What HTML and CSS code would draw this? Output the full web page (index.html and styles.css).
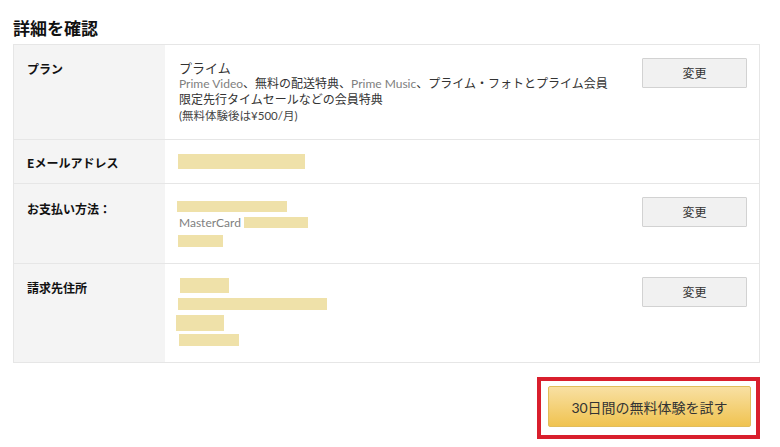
FILE: index.html
```html
<!DOCTYPE html>
<html lang="ja">
<head>
<meta charset="utf-8">
<link rel="stylesheet" href="styles.css">
</head>
<body>
<div class="page">
  <h1 class="title">詳細を確認</h1>
  <div class="table">
    <div class="row row-plan">
      <div class="label">プラン</div>
      <div class="content">
        <div class="plan-name">プライム</div>
        <div class="plan-desc"><span class="latin">Prime Video</span>、無料の配送特典、<span class="latin">Prime Music</span>、プライム・フォトとプライム会員</div>
        <div class="plan-desc">限定先行タイムセールなどの会員特典</div>
        <div class="plan-note">(無料体験後は¥500/月)</div>
      </div>
      <div class="action"><button class="btn-change">変更</button></div>
    </div>
    <div class="row row-email">
      <div class="label">Eメールアドレス</div>
      <div class="content">
        <div class="mask mask-email"></div>
      </div>
      <div class="action"></div>
    </div>
    <div class="row row-pay">
      <div class="label">お支払い方法：</div>
      <div class="content">
        <div class="mask mask-pay1"></div>
        <div class="pay-line"><span class="latin">MasterCard</span><span class="mask mask-pay2"></span></div>
        <div class="mask mask-pay3"></div>
      </div>
      <div class="action"><button class="btn-change">変更</button></div>
    </div>
    <div class="row row-addr">
      <div class="label">請求先住所</div>
      <div class="content">
        <div class="mask mask-a1"></div>
        <div class="mask mask-a2"></div>
        <div class="mask mask-a3"></div>
        <div class="mask mask-a4"></div>
      </div>
      <div class="action"><button class="btn-change">変更</button></div>
    </div>
  </div>
  <div class="cta-wrap">
    <div class="cta-frame">
      <button class="btn-trial">30日間の無料体験を試す</button>
    </div>
  </div>
</div>
</body>
</html>
```

FILE: styles.css
```css
* { box-sizing: border-box; }
html, body {
  margin: 0;
  padding: 0;
  background: #fff;
}
body {
  font-family: "Lato", "Noto Sans CJK JP", sans-serif;
  color: #333;
}
.page {
  width: 747px;
  margin-left: 13px;
  padding-top: 16px;
}
.title {
  margin: 0 0 4px 0;
  font-size: 17px;
  line-height: 24px;
  font-weight: 700;
  color: #111;
  font-family: "Noto Sans CJK JP", sans-serif;
}
.table {
  border: 1px solid #e6e6e6;
}
.row {
  display: grid;
  grid-template-columns: 151px 1fr 117px;
  border-top: 1px solid #e6e6e6;
}
.row:first-child { border-top: 0; }
.label {
  background: #f4f4f4;
  padding: 15px 0 0 13px;
  font-size: 12px;
  line-height: 16px;
  font-weight: 700;
  color: #111;
  font-family: "Noto Sans CJK JP", sans-serif;
}
.content {
  padding: 0 0 0 14px;
  display: flex;
  flex-direction: column;
  align-items: flex-start;
}
.action {
  padding: 13px 12px 0 0;
  display: flex;
  justify-content: flex-end;
  align-items: flex-start;
}
.btn-change {
  width: 105px;
  height: 30px;
  background: #f1f1f1;
  border: 1px solid #d2d2d2;
  border-radius: 1px;
  font-family: "Noto Sans CJK JP", sans-serif;
  font-size: 12px;
  color: #333;
  padding: 0;
  line-height: 28px;
}
.latin {
  font-family: "Lato", sans-serif;
  color: #808080;
}
/* plan row */
.row-plan .content { padding-top: 15px; padding-bottom: 15px; }
.plan-name { font-size: 13px; line-height: 16px; }
.plan-desc { font-size: 12px; line-height: 16px; white-space: nowrap; }
.plan-note { font-size: 11.5px; line-height: 16px; color: #444; }
.row-plan .label { padding-top: 16px; }
/* masks */
.mask { background: #efe1a9; display: block; }
.row-email .content { padding-top: 14px; padding-bottom: 14px; }
.mask-email { width: 127px; height: 15px; margin-left: -1px; }
.row-pay .content { padding-top: 17px; padding-bottom: 16px; }
.row-pay .label { padding-top: 17px; }
.mask-pay1 { width: 110px; height: 11px; margin-left: -2px; }
.pay-line {
  margin-top: 5px;
  height: 11px;
  display: flex;
  align-items: center;
  font-size: 12px;
  line-height: 11px;
}
.mask-pay2 { display: inline-block; width: 64px; height: 11px; margin-left: 3px; }
.mask-pay3 { width: 45px; height: 12px; margin-top: 7px; margin-left: -1px; }
.row-addr .content { padding-top: 14px; padding-bottom: 16px; }
.row-addr .label { padding-top: 16px; }
.mask-a1 { width: 49px; height: 15px; margin-left: 1px; }
.mask-a2 { width: 149px; height: 12px; margin-top: 5px; margin-left: -1px; }
.mask-a3 { width: 48px; height: 16px; margin-top: 5px; margin-left: -3px; }
.mask-a4 { width: 60px; height: 12px; margin-top: 3px; }
/* CTA */
.cta-wrap {
  display: flex;
  justify-content: flex-end;
  margin-top: 14px;
}
.cta-frame {
  border: 4px solid #d91f2d;
  padding: 5px 5px 8px 7px;
}
.btn-trial {
  display: block;
  width: 203px;
  height: 41px;
  border: 1px solid #e2bd5a;
  border-radius: 2px;
  background: linear-gradient(to bottom, #f8e0a3, #f0c350);
  font-family: "Lato", "Noto Sans CJK JP", sans-serif;
  font-size: 14px;
  color: #333;
  padding: 0;
}
```
